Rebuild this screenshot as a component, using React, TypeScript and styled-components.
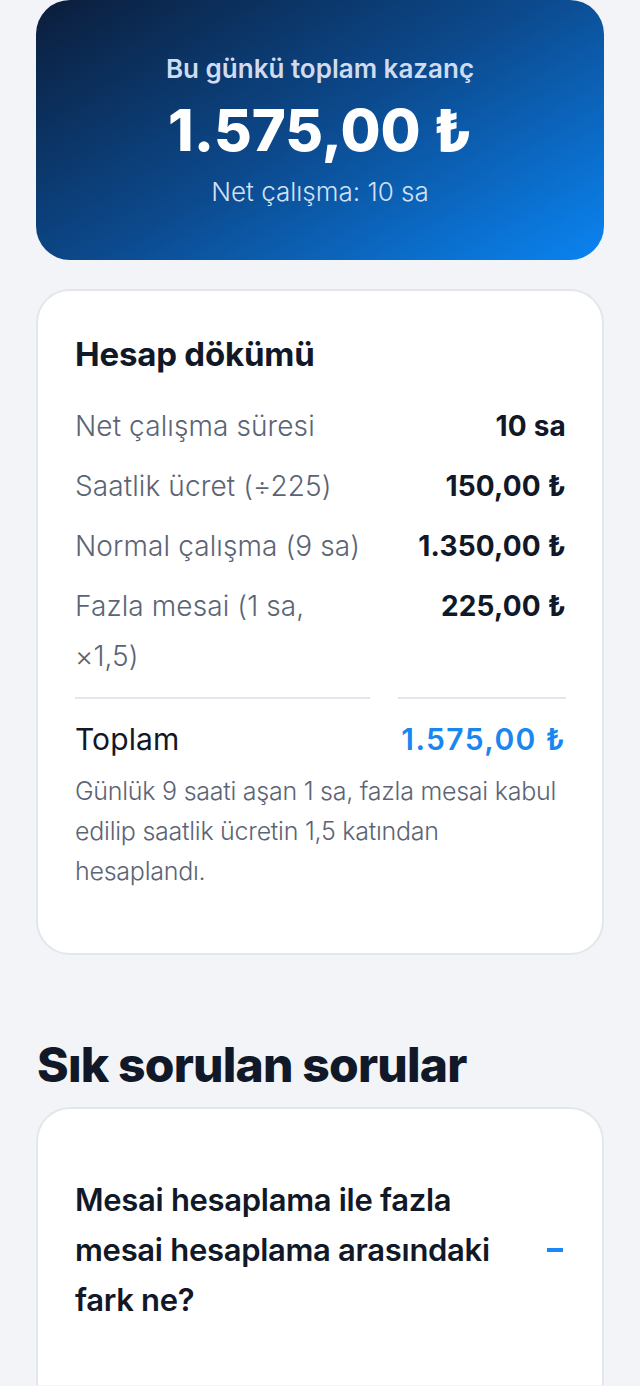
import { Fragment } from "react";
import { createGlobalStyle, styled } from "styled-components";

const GlobalStyle = createGlobalStyle`
  body {
    margin: 0;
    background: #f2f4f8;
    font-family: Inter, "Noto Sans", sans-serif;
    color: #111827;
  }
`;

const Page = styled.div`
  padding: 0 36px;
  display: flex;
  flex-direction: column;
`;

const Hero = styled.section`
  height: 260px;
  border-radius: 34px;
  background: linear-gradient(150deg, #0b1d3a 0%, #0c4a8e 50%, #0a84f2 100%);
  display: flex;
  flex-direction: column;
  align-items: center;
  justify-content: center;
  text-align: center;
`;

const HeroLabel = styled.div`
  font-size: 26px;
  font-weight: 600;
  color: #cfdcef;
  line-height: 32px;
`;

const HeroAmount = styled.div`
  font-size: 58px;
  font-weight: 800;
  color: #ffffff;
  margin-top: 13px;
  line-height: 64px;
`;

const HeroSub = styled.div`
  font-size: 26px;
  font-weight: 300;
  color: #d4e1f3;
  margin-top: 14px;
  line-height: 32px;
`;

const Card = styled.section`
  margin-top: 29px;
  background: #ffffff;
  border: 2px solid #e3e6ec;
  border-radius: 34px;
  padding: 43px 36px 62px 37px;
`;

const CardTitle = styled.h2`
  margin: 0 0 27px;
  font-size: 33px;
  font-weight: 700;
  letter-spacing: -0.2px;
  line-height: 40px;
`;

const Table = styled.div`
  display: grid;
  grid-template-columns: 295px 1fr;
  column-gap: 28px;
`;

const Label = styled.div<{ $total?: boolean }>`
  font-size: ${(p) => (p.$total ? 30 : 28)}px;
  font-weight: ${(p) => (p.$total ? 400 : 300)};
  color: ${(p) => (p.$total ? "#111827" : "#5b6475")};
  line-height: 50px;
  padding-bottom: ${(p) => (p.$total ? 0 : 10)}px;
  letter-spacing: 0.1px;
  ${(p) =>
    p.$total ? "border-top: 2px solid #e3e6ec; margin-top: 6px; padding-top: 15px;" : ""}
`;

const Value = styled.div<{ $total?: boolean }>`
  font-size: ${(p) => (p.$total ? 30 : 28)}px;
  font-weight: ${(p) => (p.$total ? 600 : 700)};
  color: ${(p) => (p.$total ? "#1a86f0" : "#111827")};
  letter-spacing: ${(p) => (p.$total ? 1.4 : 0.2)}px;
  text-align: right;
  line-height: 50px;
  padding-bottom: ${(p) => (p.$total ? 0 : 10)}px;
  ${(p) =>
    p.$total ? "border-top: 2px solid #e3e6ec; margin-top: 6px; padding-top: 15px;" : ""}
`;

const Note = styled.p`
  margin: 7px 0 0;
  font-size: 25px;
  font-weight: 300;
  color: #5b6475;
  line-height: 40px;
  letter-spacing: -0.25px;
`;

const SectionTitle = styled.h2`
  margin: 80px 0 0 1px;
  font-size: 48px;
  font-weight: 800;
  letter-spacing: -0.8px;
  line-height: 60px;
`;

const FaqCard = styled.section`
  margin-top: 12px;
  background: #ffffff;
  border: 2px solid #e3e6ec;
  border-bottom: none;
  border-radius: 34px 34px 0 0;
  padding: 66px 36px 60px 37px;
`;

const FaqRow = styled.div`
  display: flex;
  align-items: center;
  justify-content: space-between;
`;

const Question = styled.div`
  max-width: 445px;
  font-size: 31px;
  font-weight: 600;
  line-height: 50px;
  letter-spacing: -0.3px;
`;

const Minus = styled.span`
  width: 16px;
  height: 4px;
  background: #1a88f5;
  margin-right: 3px;
`;

const rows = [
  { label: "Net çalışma süresi", value: "10 sa" },
  { label: "Saatlik ücret (÷225)", value: "150,00 ₺" },
  { label: "Normal çalışma (9 sa)", value: "1.350,00 ₺" },
  { label: "Fazla mesai (1 sa, ×1,5)", value: "225,00 ₺" },
];

export default function App() {
  return (
    <>
      <GlobalStyle />
      <Page>
        <Hero>
          <HeroLabel>Bu günkü toplam kazanç</HeroLabel>
          <HeroAmount>1.575,00 ₺</HeroAmount>
          <HeroSub>Net çalışma: 10 sa</HeroSub>
        </Hero>

        <Card>
          <CardTitle>Hesap dökümü</CardTitle>
          <Table>
            {rows.map((r) => (
              <Fragment key={r.label}>
                <Label>{r.label}</Label>
                <Value>{r.value}</Value>
              </Fragment>
            ))}
            <Label $total>Toplam</Label>
            <Value $total>1.575,00 ₺</Value>
          </Table>
          <Note>
            Günlük 9 saati aşan 1 sa, fazla mesai kabul edilip saatlik ücretin
            1,5 katından hesaplandı.
          </Note>
        </Card>

        <SectionTitle>Sık sorulan sorular</SectionTitle>
        <FaqCard>
          <FaqRow>
            <Question>
              Mesai hesaplama ile fazla mesai hesaplama arasındaki fark ne?
            </Question>
            <Minus />
          </FaqRow>
        </FaqCard>
      </Page>
    </>
  );
}
